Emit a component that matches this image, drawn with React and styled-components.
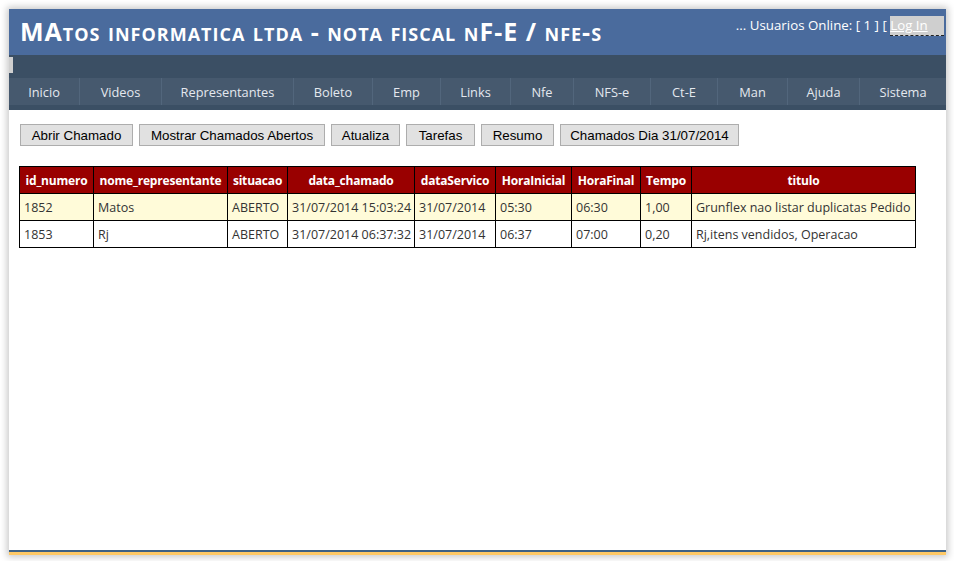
import React from "react";
import styled, { createGlobalStyle } from "styled-components";

const GlobalStyle = createGlobalStyle`
  html, body {
    margin: 0;
    padding: 0;
    background: #ffffff;
  }
  body {
    font-family: "Open Sans", "Noto Sans", sans-serif;
  }
`;

const menu = [
  { label: "Inicio", width: 70 },
  { label: "Videos", width: 82 },
  { label: "Representantes", width: 132 },
  { label: "Boleto", width: 79 },
  { label: "Emp", width: 68 },
  { label: "Links", width: 70 },
  { label: "Nfe", width: 63 },
  { label: "NFS-e", width: 77 },
  { label: "Ct-E", width: 67 },
  { label: "Man", width: 70 },
  { label: "Ajuda", width: 72 },
  { label: "Sistema", width: 87 },
];

const buttons = [
  { label: "Abrir Chamado", width: 113 },
  { label: "Mostrar Chamados Abertos", width: 186 },
  { label: "Atualiza", width: 69 },
  { label: "Tarefas", width: 69 },
  { label: "Resumo", width: 73 },
  { label: "Chamados Dia 31/07/2014", width: 179 },
];

const columns = [
  { name: "id_numero", width: 74 },
  { name: "nome_representante", width: 134 },
  { name: "situacao", width: 60 },
  { name: "data_chamado", width: 127 },
  { name: "dataServico", width: 81 },
  { name: "HoraInicial", width: 76 },
  { name: "HoraFinal", width: 69 },
  { name: "Tempo", width: 51 },
  { name: "titulo", width: 224 },
];

const rows = [
  ["1852", "Matos", "ABERTO", "31/07/2014 15:03:24", "31/07/2014", "05:30", "06:30", "1,00", "Grunflex nao listar duplicatas Pedido"],
  ["1853", "Rj", "ABERTO", "31/07/2014 06:37:32", "31/07/2014", "06:37", "07:00", "0,20", "Rj,itens vendidos, Operacao"],
];

const App = () => {
  return (
    <>
      <GlobalStyle />
      <Page>
        <Window>
          <Header>
            <Title>MAtos informatica ltda - nota fiscal nF-E / nfe-s</Title>
            <Online>
              ... Usuarios Online: [ 1 ] [ <LoginLink>Log In</LoginLink> ]
            </Online>
          </Header>
          <Strip>
            <StripStub />
          </Strip>
          <Nav>
            {menu.map((item) => (
              <NavItem key={item.label} width={item.width}>
                {item.label}
              </NavItem>
            ))}
          </Nav>
          <NavShade />
          <Main>
            <Toolbar>
              {buttons.map((b) => (
                <Button key={b.label} width={b.width}>
                  {b.label}
                </Button>
              ))}
            </Toolbar>
            <Grid>
              <colgroup>
                {columns.map((c) => (
                  <col key={c.name} style={{ width: c.width }} />
                ))}
              </colgroup>
              <thead>
                <tr>
                  {columns.map((c) => (
                    <Th key={c.name}>{c.name}</Th>
                  ))}
                </tr>
              </thead>
              <tbody>
                {rows.map((r, i) => (
                  <Row key={r[0]} odd={i % 2 === 0}>
                    {r.map((cell, j) => (
                      <Td key={j}>{cell}</Td>
                    ))}
                  </Row>
                ))}
              </tbody>
            </Grid>
          </Main>
          <Footer />
        </Window>
      </Page>
    </>
  );
};

export default App;

const Page = styled.div`
  padding: 9px 8px 0 9px;
  height: 561px;
  box-sizing: border-box;
  overflow: hidden;
`;

const Window = styled.div`
  width: 937px;
  height: 546px;
  display: flex;
  flex-direction: column;
  background: #fff;
  box-shadow: 0 0 7px 2px rgba(0, 0, 0, 0.22);
  overflow: hidden;
`;

const Header = styled.div`
  height: 46px;
  background: #4a6b9d;
  display: flex;
  align-items: flex-start;
  justify-content: space-between;
  padding-left: 11px;
  flex-shrink: 0;
`;

const Title = styled.h1`
  margin: 0;
  padding-top: 6px;
  font-family: "Open Sans", "Noto Sans", sans-serif;
  font-variant: small-caps;
  font-weight: 700;
  font-size: 25px;
  line-height: 32px;
  color: #fff;
  white-space: nowrap;
  letter-spacing: 1px;
`;

const Online = styled.div`
  padding-top: 6px;
  margin-right: -6px;
  font-family: "Open Sans", "Noto Sans", sans-serif;
  font-size: 13.3px;
  line-height: 20px;
  color: #fff;
  white-space: nowrap;
`;

const LoginLink = styled.span`
  display: inline-block;
  width: 54px;
  background: #cfcfcf;
  color: #fff;
  text-decoration: underline;
  border-bottom: 1px dashed #222;
  line-height: 19px;
`;

const Strip = styled.div`
  height: 23px;
  background: #3b4f64;
  flex-shrink: 0;
  padding-top: 2px;
  box-sizing: border-box;
`;

const StripStub = styled.div`
  width: 4px;
  height: 16px;
  background: #d0d0d0;
`;

const Nav = styled.div`
  height: 27px;
  display: flex;
  background: #46596e;
  flex-shrink: 0;
`;

const NavItem = styled.div`
  width: ${({ width }) => width}px;
  box-sizing: border-box;
  display: flex;
  align-items: center;
  justify-content: center;
  font-family: "Open Sans", "Noto Sans", sans-serif;
  font-size: 12.8px;
  color: #e4e8ee;
  border-left: 1px solid #52667c;
  &:first-child {
    border-left: none;
  }
`;

const NavShade = styled.div`
  height: 5px;
  background: #3b4f64;
  flex-shrink: 0;
`;

const Main = styled.div`
  flex: 1;
  padding: 14px 0 0 10px;
`;

const Toolbar = styled.div`
  display: flex;
  gap: 6px;
  padding-left: 1px;
  margin-bottom: 20px;
`;

const Button = styled.button`
  width: ${({ width }) => width}px;
  height: 22px;
  padding: 0;
  font-family: "Liberation Sans", Arial, sans-serif;
  font-size: 13.33px;
  color: #000;
  background: #e1e1e1;
  border: 1px solid #adadad;
  border-radius: 0;
  white-space: nowrap;
`;

const Grid = styled.table`
  width: 896px;
  border-collapse: collapse;
  table-layout: fixed;
  font-family: "Open Sans", "Noto Sans", sans-serif;
  font-size: 12.5px;
`;

const Th = styled.th`
  height: 26px;
  padding: 0 3px;
  background: #990000;
  color: #fff;
  font-size: 12px;
  letter-spacing: -0.2px;
  font-weight: 700;
  text-align: center;
  border: 1px solid #000;
  white-space: nowrap;
  overflow: hidden;
`;

const Row = styled.tr`
  background: ${({ odd }) => (odd ? "#fffbd9" : "#fff")};
`;

const Td = styled.td`
  height: 26px;
  padding: 0 4px;
  color: #333;
  border: 1px solid #000;
  white-space: nowrap;
  overflow: hidden;
`;

const Footer = styled.div`
  height: 5px;
  flex-shrink: 0;
  border-top: 2px solid #3d6185;
  background: #ffc966;
  box-sizing: border-box;
`;
